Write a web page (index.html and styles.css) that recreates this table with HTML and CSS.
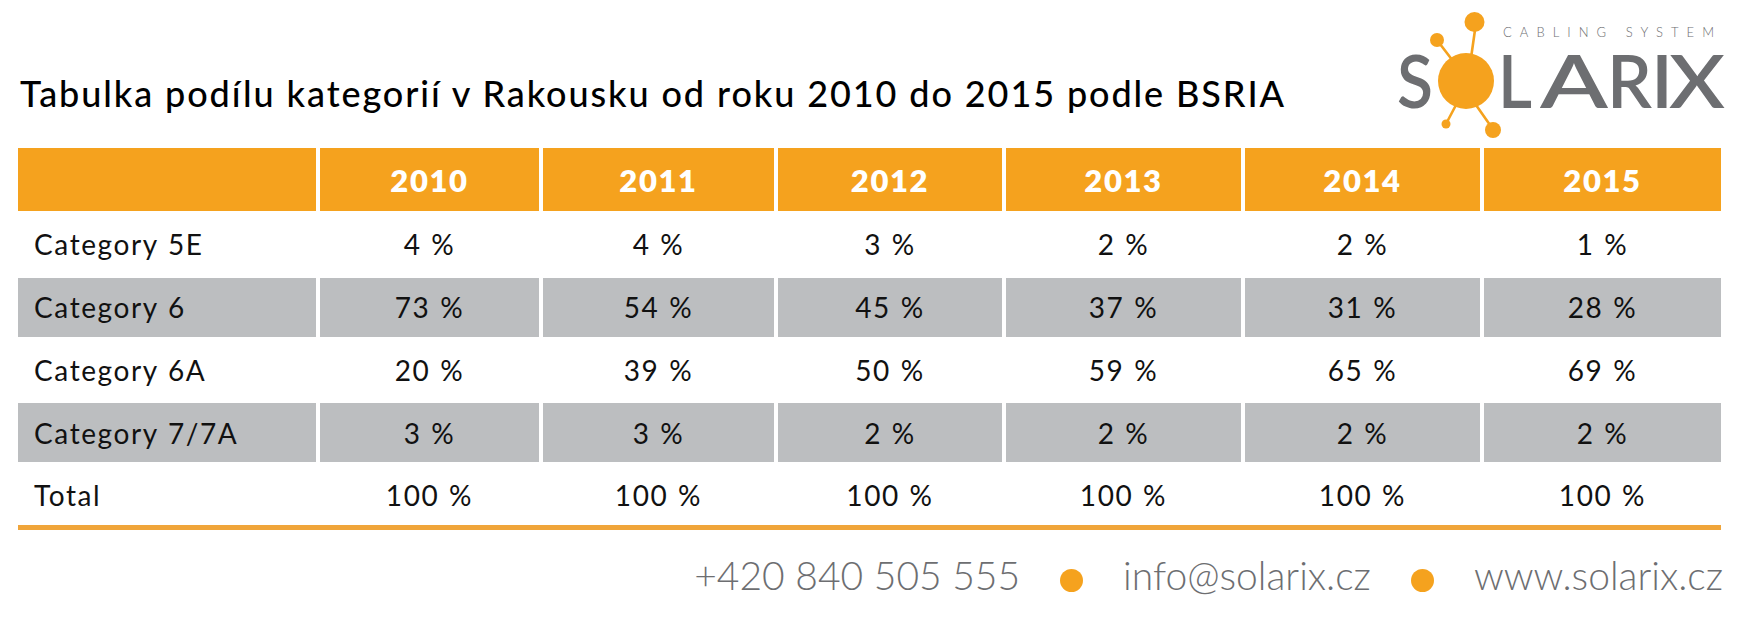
FILE: index.html
```html
<!DOCTYPE html>
<html lang="cs">
<head>
<meta charset="utf-8">
<title>Tabulka podílu kategorií v Rakousku</title>
<link rel="stylesheet" href="styles.css">
</head>
<body>
<div class="page">
  <header class="top">
    <h1 class="title">Tabulka podílu kategorií v Rakousku od roku 2010 do 2015 podle BSRIA</h1>
    <svg class="logo" width="340" height="148" viewBox="0 0 340 148" aria-label="Solarix Cabling System">
      <g class="logo-lines">
        <line x1="85" y1="30" x2="81" y2="58"/>
        <line x1="50" y1="44" x2="63" y2="61"/>
        <line x1="66" y1="105" x2="57" y2="122"/>
        <line x1="86" y1="105" x2="100" y2="125"/>
      </g>
      <g class="logo-dots">
        <circle cx="76" cy="81" r="28"/>
        <circle cx="84.5" cy="22" r="10"/>
        <circle cx="47" cy="40" r="7"/>
        <circle cx="56" cy="124" r="4.5"/>
        <circle cx="103" cy="130" r="8"/>
      </g>
      <text class="logo-tag" x="113" y="37" textLength="211" lengthAdjust="spacing">CABLING SYSTEM</text>
      <text class="logo-word" x="7" y="108" textLength="36" lengthAdjust="spacingAndGlyphs">S</text>
      <text class="logo-word" x="108" y="108" textLength="34" lengthAdjust="spacingAndGlyphs">L</text>
      <text class="logo-word" x="150" y="108" textLength="68" lengthAdjust="spacingAndGlyphs">A</text>
      <text class="logo-word" x="217" y="108" textLength="45" lengthAdjust="spacingAndGlyphs">R</text>
      <text class="logo-word" x="261" y="108" textLength="22" lengthAdjust="spacingAndGlyphs">I</text>
      <text class="logo-word" x="279" y="108" textLength="56" lengthAdjust="spacingAndGlyphs">X</text>
    </svg>
  </header>

  <div class="table">
    <div class="row head">
      <div class="cell"></div>
      <div class="cell">2010</div>
      <div class="cell">2011</div>
      <div class="cell">2012</div>
      <div class="cell">2013</div>
      <div class="cell">2014</div>
      <div class="cell">2015</div>
    </div>
    <div class="row">
      <div class="cell label">Category 5E</div>
      <div class="cell">4 %</div>
      <div class="cell">4 %</div>
      <div class="cell">3 %</div>
      <div class="cell">2 %</div>
      <div class="cell">2 %</div>
      <div class="cell">1 %</div>
    </div>
    <div class="row alt">
      <div class="cell label">Category 6</div>
      <div class="cell">73 %</div>
      <div class="cell">54 %</div>
      <div class="cell">45 %</div>
      <div class="cell">37 %</div>
      <div class="cell">31 %</div>
      <div class="cell">28 %</div>
    </div>
    <div class="row">
      <div class="cell label">Category 6A</div>
      <div class="cell">20 %</div>
      <div class="cell">39 %</div>
      <div class="cell">50 %</div>
      <div class="cell">59 %</div>
      <div class="cell">65 %</div>
      <div class="cell">69 %</div>
    </div>
    <div class="row alt">
      <div class="cell label">Category 7/7A</div>
      <div class="cell">3 %</div>
      <div class="cell">3 %</div>
      <div class="cell">2 %</div>
      <div class="cell">2 %</div>
      <div class="cell">2 %</div>
      <div class="cell">2 %</div>
    </div>
    <div class="row">
      <div class="cell label">Total</div>
      <div class="cell">100 %</div>
      <div class="cell">100 %</div>
      <div class="cell">100 %</div>
      <div class="cell">100 %</div>
      <div class="cell">100 %</div>
      <div class="cell">100 %</div>
    </div>
  </div>
  <div class="rule"></div>

  <footer class="contacts">
    <span class="contact">+420 840 505 555</span>
    <span class="dot"></span>
    <span class="contact">info@solarix.cz</span>
    <span class="dot"></span>
    <span class="contact">www.solarix.cz</span>
  </footer>
</div>
</body>
</html>
```

FILE: styles.css
```css
html, body {
  margin: 0;
  padding: 0;
  background: #ffffff;
}

body {
  font-family: Lato, "Open Sans", "DejaVu Sans", sans-serif;
  color: #111111;
}

.page {
  width: 1743px;
  height: 627px;
  overflow: hidden;
}

/* ---------- header ---------- */
.top {
  display: flex;
  justify-content: space-between;
  align-items: flex-start;
  height: 148px;
  padding: 0 13px 0 20px;
  box-sizing: border-box;
}

.title {
  margin: 0;
  padding-top: 75px;
  font-size: 36px;
  line-height: 1;
  font-weight: 500;
  letter-spacing: 1.9px;
  color: #000000;
  white-space: nowrap;
}

.logo {
  display: block;
  flex: none;
}

.logo-lines line {
  stroke: #f5a21e;
  stroke-width: 2.6;
  stroke-linecap: round;
}

.logo-dots circle {
  fill: #f5a21e;
}

.logo-tag {
  font-family: Lato, "Open Sans", sans-serif;
  font-size: 13px;
  font-weight: 300;
  fill: #6d6e71;
}

.logo-word {
  font-family: Lato, "Open Sans", sans-serif;
  font-size: 74px;
  font-weight: 600;
  fill: #6d6e71;
}

/* ---------- table ---------- */
.table {
  display: flex;
  flex-direction: column;
  gap: 4px;
  margin-left: 18px;
  width: 1703px;
}

.row {
  display: grid;
  grid-template-columns: 298px 219px 231px 224px 235px 235px 237px;
  column-gap: 4px;
  height: 58.75px;
}

.cell {
  display: flex;
  align-items: center;
  justify-content: center;
  font-size: 28px;
  letter-spacing: 1.6px;
  word-spacing: 1px;
  white-space: nowrap;
}

.cell.label {
  justify-content: flex-start;
  padding-left: 16px;
}

.row.head {
  height: 63px;
}

.row.head .cell {
  background: #f5a21e;
  color: #ffffff;
  font-weight: 800;
  font-size: 31px;
  letter-spacing: 1.6px;
}

.row.alt .cell {
  background: #bcbec0;
}

.rule {
  margin-left: 18px;
  width: 1703px;
  height: 5px;
  background: #f0a53a;
}

/* ---------- footer ---------- */
.contacts {
  display: flex;
  justify-content: flex-end;
  align-items: center;
  gap: 40px;
  margin-top: 26px;
  padding-right: 20px;
  font-size: 39px;
  line-height: 1;
  font-weight: 300;
  color: #6d6e71;
}

.contact {
  white-space: nowrap;
}

.dot {
  flex: none;
  width: 23px;
  height: 23px;
  margin-top: 11px;
  border-radius: 50%;
  background: #f5a21e;
}
```
